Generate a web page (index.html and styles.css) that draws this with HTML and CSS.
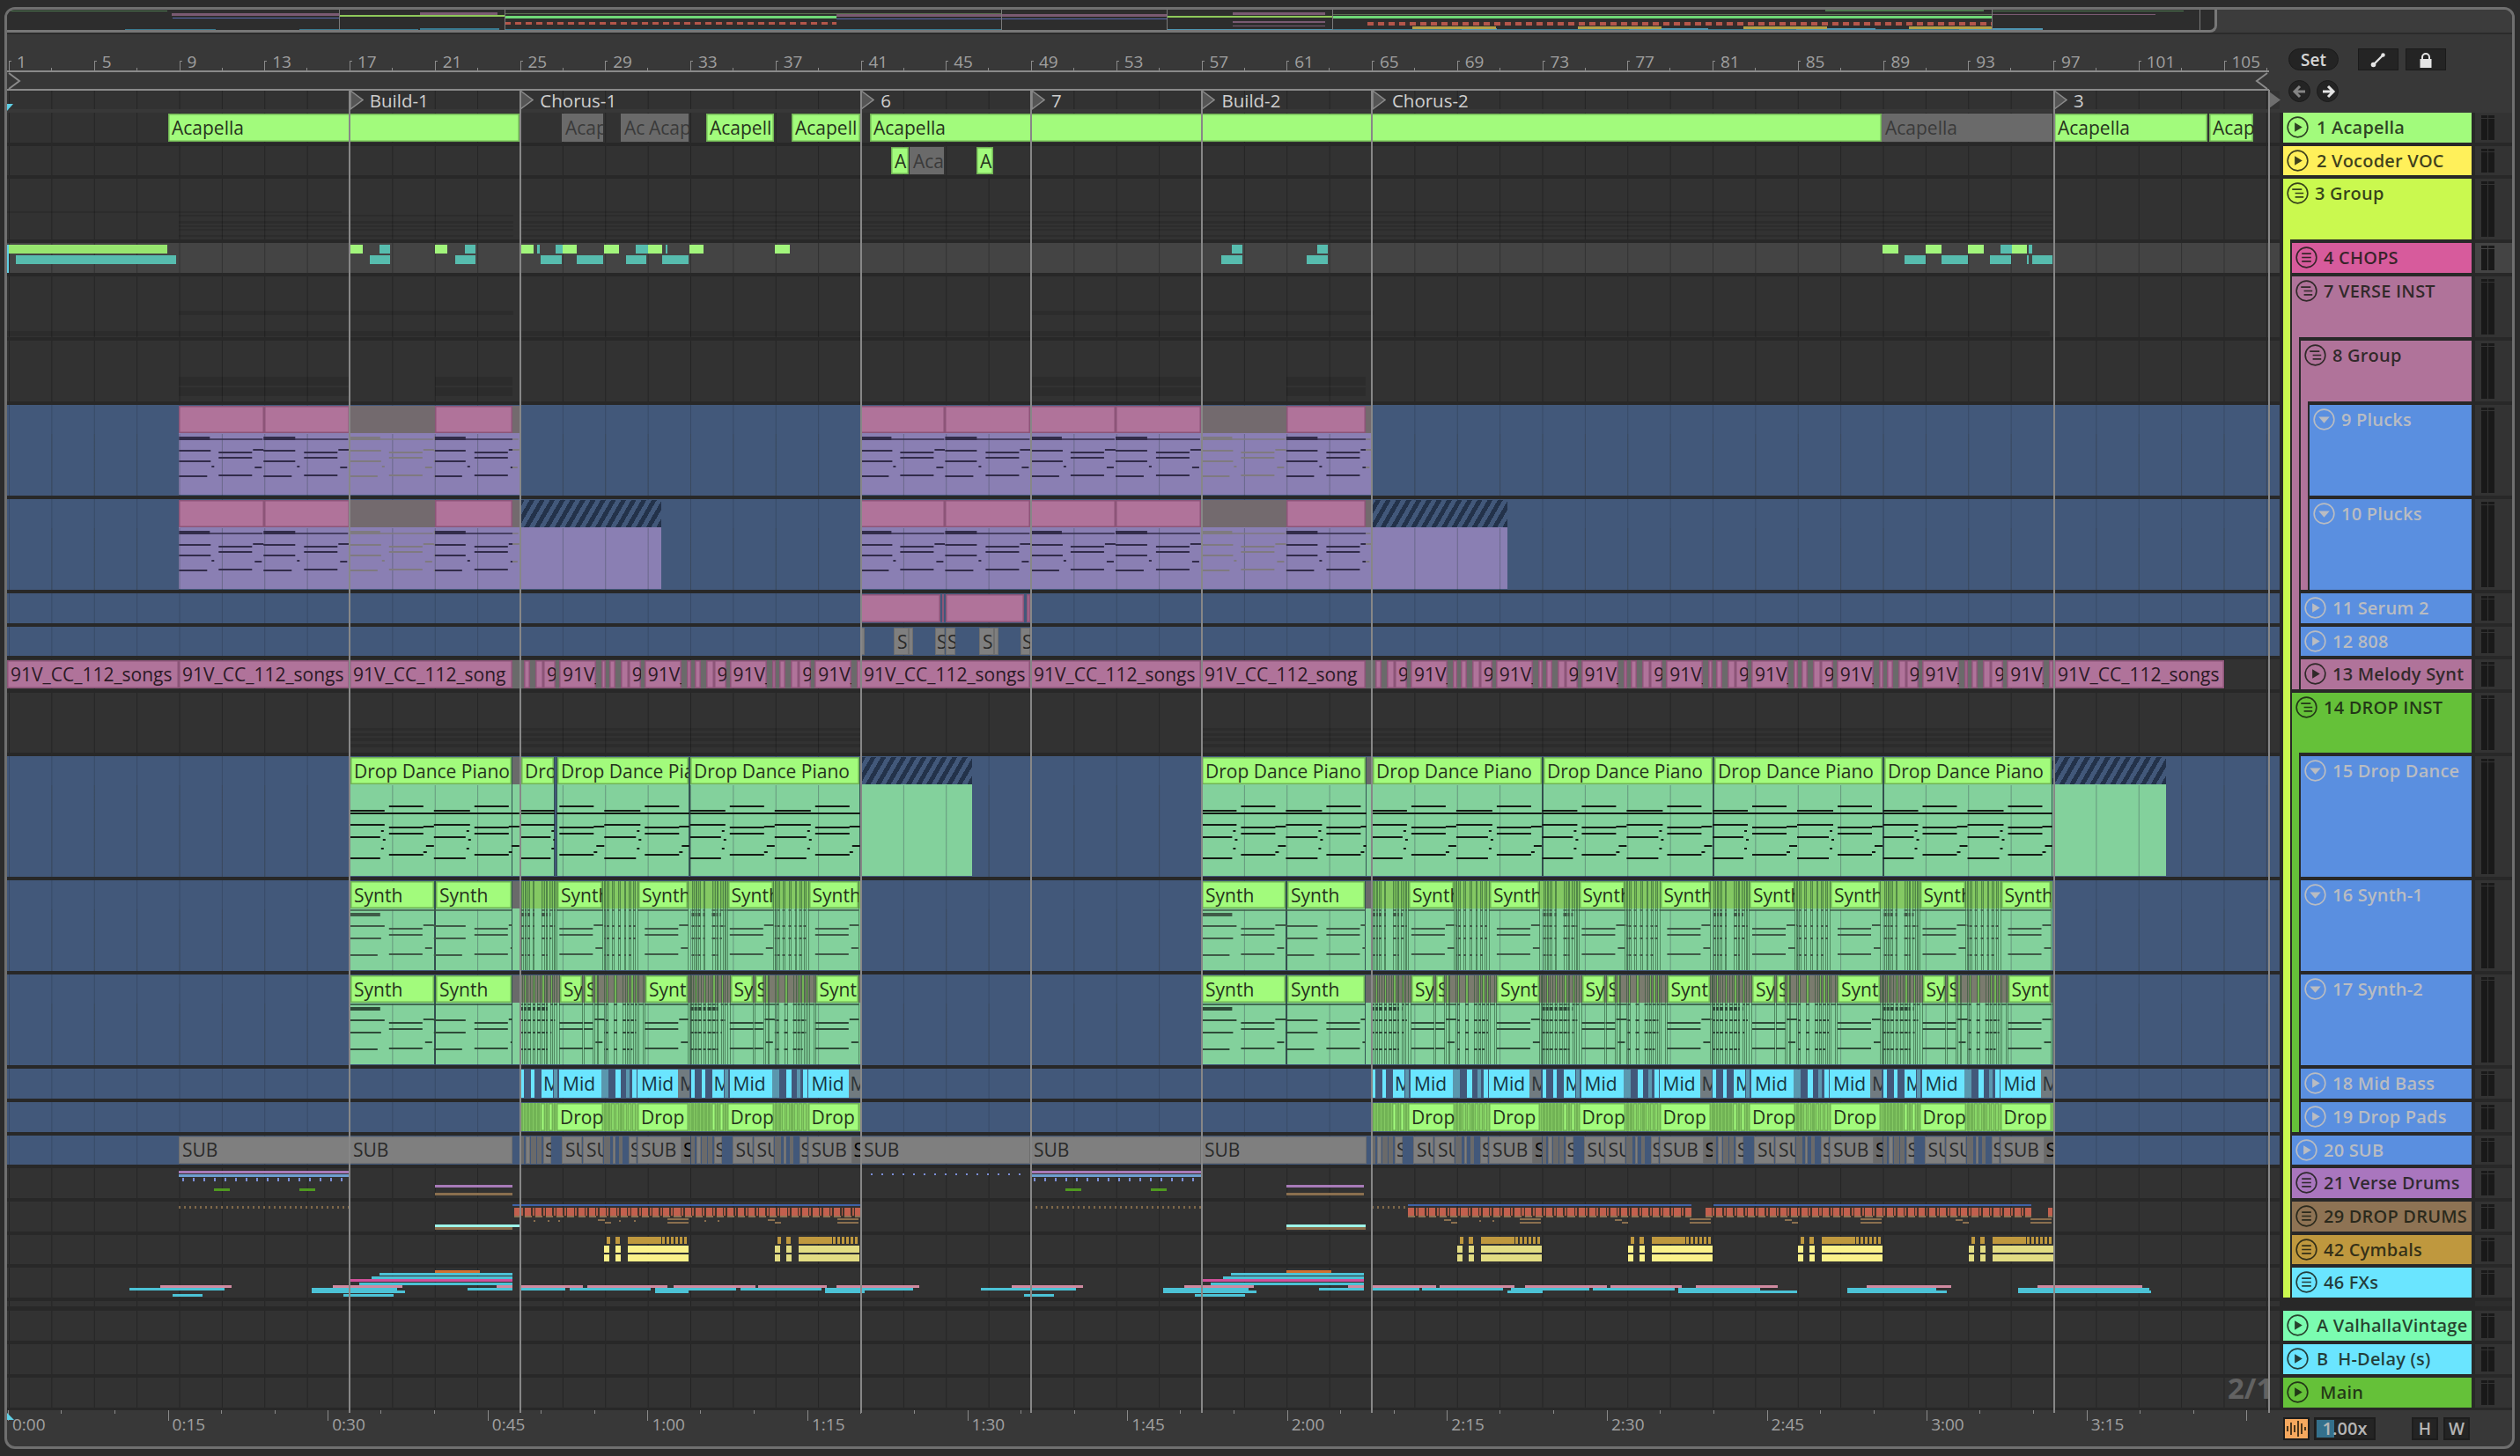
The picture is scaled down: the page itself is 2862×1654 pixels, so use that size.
FILE: index.html
```html
<!DOCTYPE html>
<html lang="en">
<head>
<meta charset="utf-8">
<title>Arrangement</title>
<link rel="stylesheet" href="styles.css">
</head>
<body>
<svg class="sprite" width="0" height="0" aria-hidden="true">
  <symbol id="i-play" viewBox="0 0 26 26"><circle cx="13" cy="13" r="11.8" fill="none" stroke="currentColor" stroke-width="1.7"/><polygon points="9.5,7.5 18.5,13 9.5,18.5" fill="currentColor"/></symbol>
  <symbol id="i-group" viewBox="0 0 26 26"><circle cx="13" cy="13" r="11.8" fill="none" stroke="currentColor" stroke-width="1.7"/><path d="M6.5 8.5H18M10 13H20M10 17.5H20" stroke="currentColor" stroke-width="1.8" fill="none"/></symbol>
  <symbol id="i-list" viewBox="0 0 26 26"><circle cx="13" cy="13" r="11.8" fill="none" stroke="currentColor" stroke-width="1.7"/><path d="M7.5 8.5H18.5M7.5 13H18.5M7.5 17.5H18.5" stroke="currentColor" stroke-width="1.8" fill="none"/></symbol>
  <symbol id="i-fold" viewBox="0 0 26 26"><circle cx="13" cy="13" r="11.8" fill="none" stroke="currentColor" stroke-width="1.7"/><polygon points="6.5,10 19.5,10 13,17.5" fill="currentColor"/></symbol>
</svg>
<main class="frame">
  <section class="overview-row"><div class="overview" id="overview"></div></section>
  <section class="top-row">
    <div class="timeline-top">
      <div class="ruler" id="ruler"></div>
      <div class="loopbar">
        <svg class="loop-start" width="17" height="22" viewBox="0 0 17 22"><path d="M2 2L14 11L2 20" fill="none" stroke="#8a8a8a" stroke-width="2"/></svg>
        <svg class="loop-end" width="17" height="22" viewBox="0 0 17 22"><path d="M15 2L3 11L15 20" fill="none" stroke="#8a8a8a" stroke-width="2"/></svg>
      </div>
      <div class="locators grid" id="locators"><span class="cue-top"></span></div>
    </div>
    <div class="side-top">
      <div class="side-line">
        <button class="pill">Set</button>
        <span class="side-buttons">
          <button class="sq"><svg width="20" height="20" viewBox="0 0 20 20"><path d="M5 15L15 5" stroke="#e4e4e4" stroke-width="2.4"/><circle cx="4.5" cy="15.5" r="2.8" fill="#e4e4e4"/><circle cx="15.5" cy="4.5" r="2.2" fill="#e4e4e4"/></svg></button>
          <button class="sq"><svg width="20" height="20" viewBox="0 0 20 20"><path d="M6 10V7a4 4 0 0 1 8 0v3" fill="none" stroke="#e4e4e4" stroke-width="2"/><rect x="3.5" y="9" width="13" height="10" fill="#e4e4e4"/></svg></button>
        </span>
      </div>
      <div class="side-line arrows">
        <button class="round"><svg width="18" height="18" viewBox="0 0 18 18"><path d="M9 3L3 9L9 15M3 9H15" fill="none" stroke="#858585" stroke-width="3"/></svg></button>
        <button class="round"><svg width="18" height="18" viewBox="0 0 18 18"><path d="M9 3L15 9L9 15M15 9H3" fill="none" stroke="#e4e4e4" stroke-width="3"/></svg></button>
      </div>
    </div>
  </section>
  <section class="tracks" id="tracks">
    <div class="row h-s" data-t="1"><div class="canvas grid"></div><div class="hd"><div class="lab c-green"><svg class="ic"><use href="#i-play"/></svg><span class="nm">1 Acapella</span></div></div><div class="meter"><i></i><i></i></div></div>
    <div class="row h-s" data-t="2"><div class="canvas grid"></div><div class="hd"><div class="lab c-yellow"><svg class="ic"><use href="#i-play"/></svg><span class="nm">2 Vocoder VOC</span></div></div><div class="meter"><i></i><i></i></div></div>
    <div class="row h-m" data-t="3"><div class="canvas grid"></div><div class="hd"><div class="lab c-lime"><svg class="ic"><use href="#i-group"/></svg><span class="nm tight">3 Group</span></div></div><div class="meter"><i></i><i></i></div></div>
    <div class="row h-s sel" data-t="4"><div class="canvas grid"></div><div class="hd"><b class="st c-lime"></b><div class="lab c-pink"><svg class="ic"><use href="#i-list"/></svg><span class="nm tight">4 CHOPS</span></div></div><div class="meter"><i></i><i></i></div></div>
    <div class="row h-m" data-t="7"><div class="canvas grid"></div><div class="hd"><b class="st c-lime"></b><div class="lab c-mauve"><svg class="ic"><use href="#i-group"/></svg><span class="nm tight">7 VERSE INST</span></div></div><div class="meter"><i></i><i></i></div></div>
    <div class="row h-m" data-t="8"><div class="canvas grid"></div><div class="hd"><b class="st c-lime"></b><b class="st c-mauve"></b><div class="lab c-mauve"><svg class="ic"><use href="#i-group"/></svg><span class="nm tight">8 Group</span></div></div><div class="meter"><i></i><i></i></div></div>
    <div class="row h-l blue" data-t="9"><div class="canvas grid"></div><div class="hd"><b class="st c-lime"></b><b class="st c-mauve"></b><b class="st c-mauve"></b><div class="lab c-blue"><svg class="ic"><use href="#i-fold"/></svg><span class="nm tight">9 Plucks</span></div></div><div class="meter"><i></i><i></i></div></div>
    <div class="row h-l blue" data-t="10"><div class="canvas grid"></div><div class="hd"><b class="st c-lime"></b><b class="st c-mauve"></b><b class="st c-mauve last"></b><div class="lab c-blue"><svg class="ic"><use href="#i-fold"/></svg><span class="nm tight">10 Plucks</span></div></div><div class="meter"><i></i><i></i></div></div>
    <div class="row h-s blue" data-t="11"><div class="canvas grid"></div><div class="hd"><b class="st c-lime"></b><b class="st c-mauve"></b><div class="lab c-blue"><svg class="ic"><use href="#i-play"/></svg><span class="nm tight">11 Serum 2</span></div></div><div class="meter"><i></i><i></i></div></div>
    <div class="row h-s blue" data-t="12"><div class="canvas grid"></div><div class="hd"><b class="st c-lime"></b><b class="st c-mauve"></b><div class="lab c-blue"><svg class="ic"><use href="#i-play"/></svg><span class="nm tight">12 808</span></div></div><div class="meter"><i></i><i></i></div></div>
    <div class="row h-s" data-t="13"><div class="canvas grid"></div><div class="hd"><b class="st c-lime"></b><b class="st c-mauve last"></b><div class="lab c-mauve"><svg class="ic"><use href="#i-play"/></svg><span class="nm tight">13 Melody Synt</span></div></div><div class="meter"><i></i><i></i></div></div>
    <div class="row h-m short" data-t="14"><div class="canvas grid"></div><div class="hd"><b class="st c-lime"></b><div class="lab c-leaf"><svg class="ic"><use href="#i-group"/></svg><span class="nm tight">14 DROP INST</span></div></div><div class="meter"><i></i><i></i></div></div>
    <div class="row h-xl blue" data-t="15"><div class="canvas grid"></div><div class="hd"><b class="st c-lime"></b><b class="st c-leaf"></b><div class="lab c-blue"><svg class="ic"><use href="#i-fold"/></svg><span class="nm tight">15 Drop Dance</span></div></div><div class="meter"><i></i><i></i></div></div>
    <div class="row h-l blue" data-t="16"><div class="canvas grid"></div><div class="hd"><b class="st c-lime"></b><b class="st c-leaf"></b><div class="lab c-blue"><svg class="ic"><use href="#i-fold"/></svg><span class="nm tight">16 Synth-1</span></div></div><div class="meter"><i></i><i></i></div></div>
    <div class="row h-l blue" data-t="17"><div class="canvas grid"></div><div class="hd"><b class="st c-lime"></b><b class="st c-leaf"></b><div class="lab c-blue"><svg class="ic"><use href="#i-fold"/></svg><span class="nm tight">17 Synth-2</span></div></div><div class="meter"><i></i><i></i></div></div>
    <div class="row h-s blue" data-t="18"><div class="canvas grid"></div><div class="hd"><b class="st c-lime"></b><b class="st c-leaf"></b><div class="lab c-blue"><svg class="ic"><use href="#i-play"/></svg><span class="nm tight">18 Mid Bass</span></div></div><div class="meter"><i></i><i></i></div></div>
    <div class="row h-s blue" data-t="19"><div class="canvas grid"></div><div class="hd"><b class="st c-lime"></b><b class="st c-leaf last"></b><div class="lab c-blue"><svg class="ic"><use href="#i-play"/></svg><span class="nm tight">19 Drop Pads</span></div></div><div class="meter"><i></i><i></i></div></div>
    <div class="row h-s blue" data-t="20"><div class="canvas grid"></div><div class="hd"><b class="st c-lime"></b><div class="lab c-blue"><svg class="ic"><use href="#i-play"/></svg><span class="nm tight">20 SUB</span></div></div><div class="meter"><i></i><i></i></div></div>
    <div class="row h-s" data-t="21"><div class="canvas grid"></div><div class="hd"><b class="st c-lime"></b><div class="lab c-purple"><svg class="ic"><use href="#i-list"/></svg><span class="nm tight">21 Verse Drums</span></div></div><div class="meter"><i></i><i></i></div></div>
    <div class="row h-s" data-t="29"><div class="canvas grid"></div><div class="hd"><b class="st c-lime"></b><div class="lab c-brown"><svg class="ic"><use href="#i-list"/></svg><span class="nm tight">29 DROP DRUMS</span></div></div><div class="meter"><i></i><i></i></div></div>
    <div class="row h-s" data-t="42"><div class="canvas grid"></div><div class="hd"><b class="st c-lime"></b><div class="lab c-gold"><svg class="ic"><use href="#i-list"/></svg><span class="nm tight">42 Cymbals</span></div></div><div class="meter"><i></i><i></i></div></div>
    <div class="row h-s" data-t="46"><div class="canvas grid"></div><div class="hd"><b class="st c-lime last"></b><div class="lab c-cyan"><svg class="ic"><use href="#i-list"/></svg><span class="nm tight">46 FXs</span></div></div><div class="meter"><i></i><i></i></div></div>
    <div class="row h-thin"><div class="canvas grid"></div><div class="hd"></div><div class="meter bare"></div></div>
    <div class="row h-s" data-t="A"><div class="canvas grid"></div><div class="hd"><div class="lab c-mint"><svg class="ic"><use href="#i-play"/></svg><span class="nm">A ValhallaVintage</span></div></div><div class="meter"><i></i><i></i></div></div>
    <div class="row h-s" data-t="B"><div class="canvas grid"></div><div class="hd"><div class="lab c-cyan"><svg class="ic"><use href="#i-play"/></svg><span class="nm">B&nbsp; H-Delay (s)</span></div></div><div class="meter"><i></i><i></i></div></div>
    <div class="row h-s" data-t="M"><div class="canvas grid"></div><div class="hd"><div class="lab c-leaf"><svg class="ic"><use href="#i-play"/></svg><span class="nm main">Main</span></div></div><div class="meter"><i></i><i></i></div></div>
    <div class="sig">2/1</div>
    <div class="vlines" id="vlines"></div>
  </section>
  <section class="bottom-row">
    <div class="timeruler" id="timeruler"><span class="cue-bottom"></span></div>
    <div class="side-bottom">
      <button class="wave"><svg width="26" height="22" viewBox="0 0 26 22"><path d="M3 8V14M7 4V18M11 7V15M15 2V20M19 5V17M23 9V13" stroke="#3a2a14" stroke-width="1.8"/></svg></button>
      <div class="tempo"><span class="tempo-fill"></span><span class="tempo-txt">1.00x</span></div>
      <span class="hw"><button class="key">H</button><button class="key">W</button></span>
    </div>
  </section>
</main>
<script src="script.js"></script>
</body>
</html>
```
FILE: styles.css
```css
* { box-sizing: border-box; }
html, body { margin: 0; padding: 0; }
body { width: 2862px; height: 1654px; background: #2c2c2c; overflow: hidden; font-family: "Open Sans", "Liberation Sans", sans-serif; }
.sprite { position: absolute; }
button { font-family: inherit; padding: 0; border: 0; }

.frame { width: 2851px; height: 1638px; margin: 8px 0 0 5px; border: 3px solid #6f6f6f; border-radius: 12px; background: #383838; display: flex; flex-direction: column; overflow: hidden; }

/* overview */
.overview-row { height: 28px; flex: none; background: #3c3c3c; border-bottom: 2px solid #2b2b2b; }
.overview { position: relative; width: 2510px; height: 26px; background: #2d2d2d; border-right: 3px solid #777; border-bottom: 3px solid #777; border-bottom-right-radius: 8px; overflow: hidden; }
.ov { position: absolute; display: block; }
.ov-red { background: repeating-linear-gradient(90deg, #b4564a 0 7px, #3b2c2a 7px 12px); }
.ov-gold { background: repeating-linear-gradient(90deg, #b5a148 0 95px, transparent 95px 188px); }

/* top */
.top-row { flex: none; height: 85px; margin-bottom: 4px; display: grid; grid-template-columns: 2581px 1fr; }
.timeline-top { display: flex; flex-direction: column; min-width: 0; }
.ruler { height: 41px; flex: none; display: flex; padding-left: 2px; background: #383838; }
.bar-cell { flex: none; width: 96.76px; height: 41px; position: relative; padding: 18px 0 0 9px; font-size: 19px; line-height: 26px; color: #a0a0a0; background: linear-gradient(#8a8a8a, #8a8a8a) 48px 38px / 1px 3px no-repeat; }
.bar-cell::before { content: ""; position: absolute; left: 0; bottom: 0; width: 1px; height: 11px; background: #8a8a8a; }
.bar-cell::after { content: ""; position: absolute; left: 0; bottom: 10px; width: 3px; height: 1px; background: #8a8a8a; }
.loopbar { position: relative; height: 23px; flex: none; width: 2569px; background: #373737; border-top: 2px solid #8a8a8a; border-bottom: 2px solid #8a8a8a; }
.loop-start { position: absolute; left: 0; top: -1px; }
.loop-end { position: absolute; right: 0; top: -1px; }
.locators { position: relative; height: 21px; flex: none; }
.grid { background-color: #323232; background-image: linear-gradient(90deg, rgba(0,0,0,.28) 1.4px, transparent 1.4px); background-size: 48.38px 100%; background-position: 2px 0; }
.cue-top { position: absolute; left: 0; top: 15px; width: 0; height: 0; border-left: 7px solid #5fd0e6; border-right: 0; border-bottom: 8px solid transparent; border-top: 0; }
.locator { position: absolute; top: 0; height: 21px; display: flex; align-items: center; color: #cfcfcf; font-size: 20.5px; white-space: nowrap; }
.locator svg { margin-right: 7px; flex: none; }

/* side top */
.side-top { padding: 16px 0 0 10px; display: flex; flex-direction: column; gap: 11px; }
.side-line { display: flex; align-items: center; }
.pill { width: 57px; height: 25px; border-radius: 13px; background: #242424; border: 1px solid #1b1b1b; color: #d6d6d6; font-size: 19px; font-weight: 600; line-height: 22px; }
.side-buttons { display: flex; gap: 8px; margin-left: 22px; }
.sq { width: 46px; height: 25px; background: #242424; border: 1px solid #1b1b1b; display: flex; align-items: center; justify-content: center; }
.arrows { gap: 7px; }
.round { width: 25px; height: 25px; border-radius: 50%; background: #242424; border: 1px solid #1b1b1b; display: flex; align-items: center; justify-content: center; }

/* tracks */
.tracks { position: relative; flex: none; display: flex; flex-direction: column; gap: 4px; background: #282828; padding-bottom: 3px; }
.row { display: grid; grid-template-columns: 2581px 214px 42px; column-gap: 4px; flex: none; }
.h-s { height: 33.7px; }
.h-m { height: 69px; }
.h-m.short { height: 68px; }
.h-l { height: 103px; }
.h-xl { height: 137px; }
.h-thin { height: 6.5px; margin-bottom: 1px; }
.row.sel .canvas { background-color: #444; }
.row.blue .canvas { background-color: #42587a; background-image: linear-gradient(90deg, rgba(0,0,0,.16) 1.4px, transparent 1.4px); }
.canvas { position: relative; overflow: hidden; min-width: 0; }
.hd { display: flex; min-width: 0; }
.st { flex: none; width: 8px; margin: -4px 2px -4px 0; }
.st.last { margin-bottom: 0; }
.lab { flex: 1; min-width: 0; display: flex; align-items: flex-start; padding: 4px 0 0 4px; color: rgba(20,24,16,.82); overflow: hidden; white-space: nowrap; }
.ic { width: 25px; height: 25px; flex: none; margin-right: 9px; }
.nm { font-size: 20px; font-weight: 600; line-height: 25px; letter-spacing: .2px; }
.nm.tight { margin-left: -2px; }
.nm.main { margin-left: 4px; }
.c-green { background: #a2fb7c; }
.c-yellow { background: #fff05a; }
.c-lime { background: #caf94f; }
.c-pink { background: #d75b9c; }
.c-mauve { background: #b0739a; }
.c-blue { background: #5a8fe0; color: #b9bcc2; }
.c-leaf { background: #65c139; }
.c-purple { background: #a976be; }
.c-brown { background: #8e7354; }
.c-gold { background: #bf983e; }
.c-cyan { background: #6ae5ff; }
.c-mint { background: #7bfcb0; }
.st.c-mauve { background: #b0739a; }
.meter { background: #333; display: flex; gap: 1px; padding: 3px 0 3px 7px; }
.row.sel .meter { background: #444; }
.meter.bare { background: #2d2d2d; }
.meter i { display: block; width: 7px; background: linear-gradient(#191919 0 3px, transparent 3px 4px, #191919 4px); }

.sig { position: absolute; left: 2522px; top: 1429px; font-size: 33px; font-weight: 700; color: #626262; line-height: 40px; }
.vlines { position: absolute; left: 0; top: -26px; bottom: -3px; width: 2581px; pointer-events: none; }
.vl { position: absolute; top: 0; bottom: 0; width: 2px; background: #878787; }

/* clips */
.clip { position: absolute; top: 1px; bottom: 1px; overflow: hidden; }
.head { height: 100%; display: flex; align-items: center; padding-left: 4px; font-size: 21px; white-space: nowrap; overflow: hidden; line-height: 26px; }
.k-g .head { background: #a2fb7c; color: #26331d; box-shadow: inset 0 0 0 1.5px #71b355; }
.k-x .head { background: #6a6a6a; color: #3a3a3a; }
.k-xg .head { background: #7a7b6e; color: #333; }
.k-p .head { background: #b0739a; color: #2c1a26; box-shadow: inset 0 0 0 1.5px #8c5578; }
.k-q .head { background: #736a6e; }
.k-c .head { background: #6ae5ff; color: #173443; }
.k-d .head { background: #5a97ae; color: #263a44; }
.k-y .head { background: #717b80; color: #2c3338; }
.k-s .head { background: #7f7f7f; color: #2a2a2a; box-shadow: inset 0 0 0 1px #6e6e6e; }
.k-t .head { background: #6a6a6a; }
.k-h .head { background: repeating-linear-gradient(-60deg, #23324a 0 5px, #42587a 5px 10px); }
.tall .head { height: 31px; }
.tall .body { position: absolute; left: 0; right: 0; top: 31px; bottom: 0; }
.m-g .body { background: #83d19c; }
.m-p .body { background: #8a7fb3; }
.edge { border-left: 1px solid rgba(40,80,50,.55); }
.edge2 { border-right: 1px solid rgba(40,80,50,.55); }
.strip .head { padding-left: 2px; }

.rc { position: absolute; display: block; }
.band { position: absolute; top: 1px; height: 31px; }
.band-green { background: #84c963; }
.band-grey { background: #7a7b6e; }
.gridover { position: absolute; left: 0; right: 0; top: 33px; bottom: 0; background-image: linear-gradient(90deg, rgba(60,70,80,.42) 1.4px, transparent 1.4px); background-size: 48.38px 100%; background-position: 2px 0; pointer-events: none; }
.notes { position: absolute; left: 0; top: 0; width: 2581px; height: 100%; pointer-events: none; }
.redbar { background: repeating-linear-gradient(90deg, #c2604e 0 7px, #3f322b 7px 8.5px, #b05c48 8.5px 10.5px, #3f322b 10.5px 12.1px); }
.dots-br { background: repeating-linear-gradient(90deg, #7e6749 0 2px, transparent 2px 6px); }
.dots-bl { background: repeating-linear-gradient(90deg, #7c8fd8 0 2px, transparent 2px 12px); }
.hatch-br { background: repeating-linear-gradient(90deg, #8e7354 0 8px, #3c342b 8px 12.1px); }

/* bottom */
.bottom-row { flex: 1; display: grid; grid-template-columns: 2581px 1fr; min-height: 0; }
.timeruler { position: relative; display: flex; padding-left: 1px; overflow: hidden; }
.cue-bottom { position: absolute; left: 0; top: 3px; width: 0; height: 0; border-left: 8px solid #5fd0e6; border-top: 8px solid transparent; }
.t-cell { flex: none; width: 181.6px; height: 40px; padding: 3px 0 0 5px; font-size: 19px; line-height: 26px; color: #a0a0a0; background: linear-gradient(#8a8a8a, #8a8a8a) 0 0 / 1px 12px no-repeat, linear-gradient(#8a8a8a, #8a8a8a) 60px 0 / 1px 4px no-repeat, linear-gradient(#8a8a8a, #8a8a8a) 121px 0 / 1px 4px no-repeat; }
.side-bottom { display: flex; align-items: flex-start; padding: 8px 0 0 4px; }
.wave { width: 30px; height: 26px; background: #f5a85e; border: 2px solid #1d1d1d; display: flex; align-items: center; justify-content: center; }
.tempo { position: relative; width: 70px; height: 26px; margin-left: 5px; background: #242424; border: 2px solid #1d1d1d; color: #b5b5b5; font-size: 20px; font-weight: 600; line-height: 22px; text-align: center; }
.tempo-fill { position: absolute; left: 1px; top: 1px; bottom: 1px; width: 20px; background: #34708c; }
.tempo-txt { position: relative; }
.hw { display: flex; gap: 6px; margin-left: 41px; }
.key { width: 30px; height: 26px; background: #242424; border: 2px solid #1d1d1d; color: #b5b5b5; font-size: 19px; font-weight: 600; line-height: 20px; }
```
FILE: script.js
```js
const B = b => 396.8 + (b - 17) * 24.19;
const P4 = 96.76, P8 = 193.52, CX = 8;
const cv = {}, tops = {}, paths = {};
document.querySelectorAll('.row[data-t]').forEach(r => {
  const c = r.querySelector('.canvas');
  cv[r.dataset.t] = c;
  tops[r.dataset.t] = c.getBoundingClientRect().top;
  paths[r.dataset.t] = {};
});

function clip(t, x0, x1, kind, label, opt) {
  opt = opt || {};
  const el = document.createElement('div');
  el.className = 'clip k-' + kind + (opt.body ? ' tall m-' + opt.body : '') + (x1 - x0 < 14 ? ' strip' : '');
  if (opt.edge) el.classList.add('edge', 'edge2');
  el.style.left = (x0 - CX) + 'px';
  el.style.width = (x1 - x0) + 'px';
  const h = document.createElement('div');
  h.className = 'head';
  if (label) h.textContent = label;
  el.appendChild(h);
  if (opt.body) { const b = document.createElement('div'); b.className = 'body'; el.appendChild(b); }
  cv[t].appendChild(el);
}
function rect(t, x, y, w, h, color, cls) {
  const el = document.createElement('span');
  el.className = 'rc' + (cls ? ' ' + cls : '');
  el.style.left = (x - CX) + 'px';
  el.style.top = (y - tops[t]) + 'px';
  el.style.width = w + 'px';
  el.style.height = h + 'px';
  if (color) el.style.background = color;
  cv[t].appendChild(el);
}
function band(t, a, b, cls, full) {
  const el = document.createElement('span');
  el.className = 'band ' + cls;
  el.style.left = (a - CX) + 'px';
  el.style.width = (b - a) + 'px';
  if (full) el.style.height = (cv[t].clientHeight - 2) + 'px';
  cv[t].prepend(el);
}
/* notes drawn as horizontal strokes: pattern entries [offset, length, y, thickness?] */
function notes(t, x0, x1, bodyTop, pat, color) {
  const org = B(9);
  const k0 = Math.floor((x0 - org) / P8) - 1, k1 = Math.ceil((x1 - org) / P8);
  const store = paths[t];
  store[color] = store[color] || [];
  for (let k = k0; k <= k1; k++) {
    for (const n of pat) {
      const a = Math.max(org + k * P8 + n[0], x0), b = Math.min(org + k * P8 + n[0] + n[1], x1);
      if (b - a < .5) continue;
      const y = bodyTop - tops[t] + n[2];
      const th = n[3] || 1.8;
      store[color].push('M' + (a - CX).toFixed(1) + ' ' + (y - th / 2).toFixed(1) + 'H' + (b - CX).toFixed(1) + 'V' + (y + th / 2).toFixed(1) + 'H' + (a - CX).toFixed(1) + 'Z');
    }
  }
}
const PN = [[45,39,24],[142,39,24],[0,40,29],[96,41,29],[0,193,32],[0,40,45],[96,41,45],[45,39,48],[142,39,48],[84,12,47],[181,12,47],[45,39,55],[142,39,55],[0,35,59],[96,36,59],[36,3,52],[133,3,52],[38,3,62],[135,3,62],[87,9,69],[184,9,69],[36,3,72],[133,3,72],[45,39,79],[142,39,79],[0,35,83],[96,36,83],[84,4,76],[181,4,76]];
const PP = [[0,35,5,4],[35,60,6,1.5],[96,36,5,4],[132,60,6,1.5],[0,36,19],[45,38,21],[84,12,18],[96,36,19],[142,38,21],[181,12,18],[45,38,27],[142,38,27],[0,36,31],[96,36,31],[86,8,38],[183,8,38],[37,3,37],[134,3,37],[0,32,48],[96,32,48],[45,38,47],[142,38,47]];
const PS = [[0,35,6,4],[0,193,1,1.5],[0,40,19],[45,38,22],[84,12,18],[96,36,19],[142,38,22],[181,12,18],[45,38,29],[142,38,29],[0,36,33],[96,36,33],[86,8,44],[183,8,44],[0,32,52],[96,32,52],[45,38,51],[142,38,51]];

/* T1 + T2 */
clip('1', 191, 590, 'g', 'Acapella');
clip('1', 638, 685, 'x', 'Acap'); clip('1', 705, 733, 'x', 'Ac'); clip('1', 733, 782, 'x', 'Acap');
clip('1', 802, 879, 'g', 'Acapell'); clip('1', 899, 977, 'g', 'Acapell');
clip('1', 988, 2137, 'g', 'Acapella'); clip('1', 2137, 2331, 'x', 'Acapella');
clip('1', 2333, 2507, 'g', 'Acapella'); clip('1', 2509, 2559, 'g', 'Acap');
clip('2', 1012, 1032, 'g', 'A'); clip('2', 1033, 1072, 'x', 'Aca'); clip('2', 1109, 1128, 'g', 'A');

/* T4 */
const GRN = '#a2f57c', TEA = '#57bcae';
[[397,15],[494,14],[591,15],[639,16],[686,17],[736,16],[783,16],[880,17],[2138,18],[2187,18],[2235,18],[2285,17]].forEach(a => rect('4', a[0], 278, a[1], 10, GRN));
rect('4', 10, 278, 180, 10, '#97e56f');
[[431,12],[528,12],[610,3],[631,8],[722,14],[756,2],[1399,12],[1496,12],[2272,13],[2304,4]].forEach(a => rect('4', a[0], 278, a[1], 10, TEA));
[[18,182],[420,23],[517,23],[614,24],[655,30],[711,23],[752,30],[1387,24],[1484,24],[2163,24],[2205,30],[2260,24],[2302,2],[2308,23]].forEach(a => rect('4', a[0], 290, a[1], 10, TEA));
rect('4', 8, 278, 2, 33, '#5fd0e6');

/* faint stripes in collapsed groups */
const FAINT = 'rgba(0,0,0,.11)';
[[240,2],[244,2],[251,3],[256,2],[260,2],[267,2]].forEach((s, i) => { rect('3', i < 1 ? 8 : 203, s[0], 380, s[1], FAINT); rect('3', 591, s[0], 386, s[1], FAINT); rect('3', 977, s[0], 580, s[1], FAINT); rect('3', 1558, s[0], 773, s[1], FAINT); });
[[353,5,203,380],[353,5,1170,390],[376,6,8,2320]].forEach(s => rect('7', s[2], s[0], s[3], s[1], FAINT));
[[428,10],[440,10]].forEach(s => { rect('8', 203, s[0], 194, s[1], FAINT); rect('8', 494, s[0], 88, s[1], FAINT); rect('8', 1170, s[0], 194, s[1], FAINT); rect('8', 1461, s[0], 90, s[1], FAINT); });
[[827,3],[833,3],[838,4],[845,4]].forEach(s => { rect('14', 397, s[0], 580, s[1], FAINT); rect('14', 1364, s[0], 967, s[1], FAINT); });

/* T9 + T10 */
function mauveBlock(t, top, segs) {
  segs.forEach(s => clip(t, s[0], s[1], s[2], '', { body: 'p' }));
  segs.forEach(s => notes(t, s[0], s[1], top, PP, s[2] === 'q' ? '#7f7a80' : '#322c4a'));
}
const mb1 = [[203,300,'p'],[300,397,'p'],[397,494,'q'],[494,582,'p'],[582,591,'q']];
const mb2 = [[977,1073,'p'],[1073,1170,'p'],[1170,1267,'p'],[1267,1364,'p'],[1364,1461,'q'],[1461,1551,'p'],[1551,1558,'q']];
mauveBlock('9', tops['9'] + 33, mb1); mauveBlock('9', tops['9'] + 33, mb2);
mauveBlock('10', tops['10'] + 33, mb1); mauveBlock('10', tops['10'] + 33, mb2);
clip('10', 591, 751, 'h', '', { body: 'p' }); clip('10', 1558, 1712, 'h', '', { body: 'p' });

/* T11 + T12 */
clip('11', 977, 1068, 'p'); clip('11', 1070, 1072, 'p'); clip('11', 1074, 1163, 'p'); clip('11', 1166, 1170, 'p');
[[977,982,''],[1015,1032,'S'],[1032,1037,''],[1062,1073,'S'],[1074,1085,'S'],[1112,1129,'S'],[1129,1134,''],[1159,1170,'S']].forEach(a => clip('12', a[0], a[1], 's', a[2]));

/* T13 */
const SONG = '91V_CC_112_songs';
clip('13', 8, 203, 'p', SONG); clip('13', 203, 397, 'p', SONG); clip('13', 397, 582, 'p', '91V_CC_112_song'); clip('13', 582, 591, 'x');
clip('13', 977, 1170, 'p', SONG); clip('13', 1170, 1364, 'p', SONG); clip('13', 1364, 1551, 'p', '91V_CC_112_song'); clip('13', 1551, 1558, 'x');
clip('13', 2333, 2526, 'p', SONG);
function pat(t, start, n, period, list) {
  for (let k = 0; k < n; k++) list(start + k * period, k);
}
const P13 = [[0,4,'x'],[4,11,'p'],[11,17,'x'],[17,26,'p'],[26,40,'p','9'],[40,44,'x'],[44,86,'p','91V_'],[86,92,'x'],[92,96.76,'p']];
const run13 = o => P13.forEach(a => clip('13', o + a[0], o + a[1], a[2], a[3]));
pat('13', 591, 4, P4, run13); pat('13', 1558, 8, P4, run13);

/* T15 */
const t15 = tops['15'] + 33;
function piano(x0, x1, label) {
  clip('15', x0, x1, 'g', label, { body: 'g', edge: true });
  notes('15', x0, x1, t15, PN, '#141a14');
}
piano(397, 582, 'Drop Dance Piano'); clip('15', 582, 591, 'x', '', { body: 'g' }); notes('15', 582, 591, t15, PN, '#141a14');
piano(591, 630, 'Dro'); piano(632, 783, 'Drop Dance Pia'); piano(783, 977, 'Drop Dance Piano');
clip('15', 977, 1104, 'h', '', { body: 'g' });
piano(1364, 1552, 'Drop Dance Piano'); clip('15', 1552, 1558, 'x', '', { body: 'g' });
[[1558,1752],[1752,1946],[1946,2139],[2139,2331]].forEach(a => piano(a[0], a[1], 'Drop Dance Piano'));
clip('15', 2331, 2460, 'h', '', { body: 'g' });

/* T16 + T17 */
const P16 = [[1,4],[5,7],[8,11],[14,16],[24,28],[29,31],[33,37],[38,40],[41,94,'Synth'],[95,97],[98,101],[104,107],[111,114],[118,120],[123,126],[128,131],[133,191,'Synth']];
const P17 = [[0,3,'xg'],[4,7],[8,12,'xg'],[14,17],[19,23,'xg'],[24,28],[29,31],[34,37],[38,42,'xg'],[44,71,'Sy'],[72,83,'S'],[84,88],[88,96,'xg'],[97,100],[106,110],[116,120,'xg'],[121,124],[125,129],[130,133],[134,140,'xg'],[141,191,'Synt'],[192,193,'xg']];
function fillBody(t, a, b) {
  const el = document.createElement('span');
  el.className = 'rc';
  el.style.left = (a - CX) + 'px'; el.style.width = (b - a) + 'px';
  el.style.top = '32px'; el.style.bottom = '1px';
  el.style.background = '#83d19c';
  cv[t].prepend(el);
}
function synth(t, list, bandCls) {
  const top = tops[t] + 33;
  const col = t === '16' ? '#3f5a47' : '#2e4a38';
  const put = (a, b, kind, lab) => {
    clip(t, a, b, kind || 'g', lab, { body: 'g', edge: true });
    notes(t, a, b, top, PS, col);
  };
  fillBody(t, 591, 977); fillBody(t, 1558, 2331);
  band(t, 591, 977, bandCls); band(t, 1558, 2331, bandCls);
  put(397, 494, 'g', 'Synth'); put(494, 582, 'g', 'Synth'); clip(t, 582, 591, 'x', '', { body: 'g' });
  put(1364, 1461, 'g', 'Synth'); put(1461, 1551, 'g', 'Synth'); clip(t, 1551, 1558, 'x', '', { body: 'g' });
  const run = o => list.forEach(s => put(o + s[0], o + s[1], s[2] === 'xg' ? 'xg' : 'g', s[2] === 'xg' ? '' : s[2]));
  pat(t, 591, 2, P8, run); pat(t, 1558, 4, P8, run);
}
synth('16', P16, 'band-green'); synth('17', P17, 'band-grey');

/* T18 */
const P18 = [[0,4,'c'],[12,16,'c'],[24,37,'c','M'],[38,42,'d'],[44,92,'c','Mid'],[92,96,'d'],[96,100,'d'],[108,114,'c'],[120,124,'d'],[127,132,'c'],[133,179,'c','Mid'],[179,192,'y','M']];
const run18 = o => P18.forEach(a => clip('18', o + a[0], o + a[1], a[2], a[3]));
pat('18', 591, 2, P8, run18); pat('18', 1558, 4, P8, run18);

/* T19 */
const P19 = [[0,3],[4,6],[7,10],[11,14],[15,18],[19,22],[23,28],[29,31],[32,37],[38,40],[41,94,'Drop'],[95,98],[99,102],[103,107],[108,112],[113,116],[117,121],[122,126],[127,131],[133,191,'Drop'],[192,193]];
band('19', 591, 977, 'band-green', true); band('19', 1558, 2331, 'band-green', true);
const run19 = o => P19.forEach(a => clip('19', o + a[0], o + a[1], 'g', a[2]));
pat('19', 591, 2, P8, run19); pat('19', 1558, 4, P8, run19);

/* T20 */
clip('20', 203, 397, 's', 'SUB'); clip('20', 397, 582, 's', 'SUB');
clip('20', 977, 1170, 's', 'SUB'); clip('20', 1170, 1364, 's', 'SUB'); clip('20', 1364, 1552, 's', 'SUB');
const P20 = [[0,4,'t'],[6,11,'s'],[12,18,'t'],[19,24,'t'],[26,35,'s','S'],[47,70,'s','SU'],[71,94,'s','SU'],[95,102,'t'],[105,108,'s'],[112,116,'t'],[123,132,'s','S'],[133,183,'s','SUB'],[183,193,'t','S']];
const run20 = o => P20.forEach(a => clip('20', o + a[0], o + a[1], a[2], a[3]));
pat('20', 591, 2, P8, run20); pat('20', 1558, 4, P8, run20);

/* T21 */
[0, 967].forEach(d => {
  rect('21', 203 + d, 1330, 194, 3, '#a77ab8');
  rect('21', 203 + d, 1334, 194, 3, '#6e9fd0');
  rect('21', 207 + d, 1338, 190, 4, '', 'dots-bl');
  rect('21', 243 + d, 1350, 18, 3, '#4f9a20');
  rect('21', 340 + d, 1350, 18, 3, '#4f9a20');
  rect('21', 494 + d, 1346, 88, 3, '#a77ab8');
  rect('21', 494 + d, 1355, 88, 3, '#8a6f4e');
});
rect('21', 977, 1333, 190, 2, '', 'dots-bl');

/* T29 */
[[203,194],[1170,194],[1558,42]].forEach(a => rect('29', a[0], 1370, a[1], 3, '', 'dots-br'));
[[584,393],[1599,322],[1937,370],[2326,5]].forEach(a => {
  rect('29', a[0], 1372, a[1], 9, '', 'redbar');
  rect('29', a[0], 1381, a[1], 2, '', 'hatch-br');
});
[[582,395],[1599,322],[1946,361]].forEach(a => rect('29', a[0], 1368, a[1], 2, '#3f63a8'));
[494, 1461].forEach(x => { rect('29', x, 1391, x === 494 ? 97 : 90, 3, '#9df5ea'); rect('29', x, 1394, x === 494 ? 88 : 90, 3, '#8a6f4e'); });
[679, 872, 1640, 1834, 2027, 2221].forEach(x => { rect('29', x, 1385, 8, 2, '#8a6f4e'); rect('29', x + 8, 1388, 7, 2, '#8a6f4e'); });
[758, 951, 1726, 1919, 2113, 2306].forEach(x => { rect('29', x, 1384, 24, 2, '#8a6f4e'); rect('29', x, 1388, 24, 2, '#8a6f4e'); });
[606, 622, 634, 703, 720, 800, 815, 1680, 1695].forEach(x => rect('29', x, 1386, 2, 2, '#8a6f4e'));

/* T42 */
[686, 880, 1655, 1849, 2042, 2236].forEach((x, i) => {
  const g = '#bf983e', y = (i % 3 === 0 || i === 4) ? '#fbf18a' : '#e2dc83';
  [[3,4],[13,5],[27,38]].forEach(s => rect('42', x + s[0], 1405, s[1], 8, g));
  for (let k = 0; k < 6; k++) rect('42', x + 66 + k * 5, 1405, 3, 8, g);
  [[0,6],[13,6],[27,69]].forEach(s => { rect('42', x + s[0], 1415, s[1], 8, y); rect('42', x + s[0], 1425, s[1], 8, y); });
});

/* T46 */
const PK = '#d08aa0', CY = '#4cc2d6';
const fx = [[182,81,1460,PK],[147,108,1463,CY],[196,34,1470,CY],[494,51,1443,'#d07030'],[431,151,1446,CY],[422,160,1450,CY],[397,185,1453,'#d0509a'],[408,174,1457,CY],[378,79,1460,PK],[564,18,1460,PK],[354,97,1463,CY],[531,51,1463,CY],[354,106,1466,CY],[390,57,1470,CY]];
fx.forEach(f => { rect('46', f[0], f[2], f[1], 2.5, f[3]); rect('46', f[0] + 967, f[2], f[1], 2.5, f[3]); });
[[591,71],[667,91],[765,93],[861,78],[950,94],[1559,72],[1635,85],[1732,93],[1829,81],[1926,93],[2120,96],[2314,119]].forEach(a => rect('46', a[0], 1460, a[1], 2.5, PK));
[[591,51],[647,92],[744,92],[841,92],[937,100],[1559,53],[1615,92],[1716,89],[1809,93],[1906,93],[2098,101],[2292,149]].forEach(a => rect('46', a[0], 1463, a[1], 2.5, CY));
[[744,38],[937,45],[1712,40],[1906,135],[2098,113],[2292,151]].forEach(a => rect('46', a[0], 1466, a[1], 2.5, CY));

/* note layers and beat grid over clip bodies */
Object.keys(paths).forEach(t => {
  const cols = Object.keys(paths[t]);
  if (!cols.length) return;
  const over = document.createElement('span');
  over.className = 'gridover';
  cv[t].appendChild(over);
  const s = document.createElementNS('http://www.w3.org/2000/svg', 'svg');
  s.setAttribute('class', 'notes');
  cols.forEach(c => {
    const p = document.createElementNS('http://www.w3.org/2000/svg', 'path');
    p.setAttribute('d', paths[t][c].join(''));
    p.setAttribute('fill', c);
    s.appendChild(p);
  });
  cv[t].appendChild(s);
});

/* ruler, time ruler */
const ruler = document.getElementById('ruler');
for (let b = 1; b <= 105; b += 4) { const d = document.createElement('div'); d.className = 'bar-cell'; d.textContent = b; ruler.appendChild(d); }
const tr = document.getElementById('timeruler');
for (let s = 0; s <= 210; s += 15) {
  const d = document.createElement('div'); d.className = 't-cell';
  if (s <= 195) d.textContent = Math.floor(s / 60) + ':' + String(s % 60).padStart(2, '0');
  tr.appendChild(d);
}

/* locators */
const loc = document.getElementById('locators');
[['Build-1',17],['Chorus-1',25],['6',41],['7',49],['Build-2',57],['Chorus-2',65],['3',97]].forEach(l => {
  const d = document.createElement('div');
  d.className = 'locator';
  d.style.left = (B(l[1]) - CX) + 'px';
  d.innerHTML = '<svg width="16" height="23" viewBox="0 0 16 23"><path d="M1 1L15 11.5L1 22Z" fill="#555" stroke="#8a8a8a" stroke-width="1.5"/></svg><span>' + l[0] + '</span>';
  loc.appendChild(d);
});
const endTri = document.createElement('div');
endTri.className = 'locator';
endTri.style.left = '2569px';
endTri.innerHTML = '<svg width="13" height="23" viewBox="0 0 13 23"><path d="M0 2L13 11.5L0 21Z" fill="#6e6e6e"/></svg>';
loc.appendChild(endTri);

/* vertical markers */
const vl = document.getElementById('vlines');
[17,25,41,49,57,65,97].map(B).concat([2576]).forEach(x => {
  const d = document.createElement('div');
  d.className = 'vl';
  d.style.left = (x - CX - .5) + 'px';
  vl.appendChild(d);
});

/* overview */
const ov = document.getElementById('overview');
function o(x, y, w, h, c, cls) {
  const d = document.createElement('span');
  d.className = 'ov' + (cls ? ' ' + cls : '');
  d.style.left = (x - CX) + 'px'; d.style.top = (y - 11) + 'px'; d.style.width = w + 'px'; d.style.height = h + 'px';
  if (c) d.style.background = c;
  ov.appendChild(d);
}
[[10,180,12,1,'#4f7a50'],[195,190,15,3,'#7a5a72'],[196,190,20,1,'#5a6bb0'],[142,103,33,2,'#3a7a90'],[340,45,33,2,'#3a7a90'],
 [385,188,17,2,'#8ec85a'],[477,88,14,3,'#7a5a72'],[385,90,33,2,'#3a7a90'],[477,90,32,3,'#3a7a90'],
 [573,377,18,3,'#6fd878'],[573,564,15,1,'#5a7050'],[950,187,16,3,'#7a5a72'],[950,187,21,1,'#5a6bb0'],[573,564,33,2,'#3a7a90'],
 [1137,188,16,3,'#7a5a72'],[1137,188,21,1,'#5a6bb0'],[1325,188,18,2,'#8ec85a'],[1400,105,14,3,'#7a5a72'],[1400,105,24,2,'#7a5a72'],[1400,105,29,1,'#7a5a72'],[1325,188,33,3,'#4e94b0'],
 [1513,750,18,3,'#6fd878'],[1513,750,16,1,'#5a7050'],[1513,750,33,2,'#3a7a90'],[1660,40,32,3,'#4e94b0'],[1850,90,32,3,'#4e94b0'],[2040,90,32,3,'#4e94b0'],[2225,95,32,3,'#4e94b0'],
 [2073,180,11,2,'#4f7a50'],[2262,186,16,1,'#7a5a72'],[2262,218,12,1,'#4f7a50']
].forEach(a => o(a[0], a[2], a[1], a[3], a[4]));
o(573, 25, 377, 3, '', 'ov-red');
o(1553, 25, 710, 4, '', 'ov-red');
o(1604, 30, 660, 3, '', 'ov-gold');
[385, 573, 1137, 1325, 1513, 2262, 2498].forEach(x => o(x, 11, 1, 24, '#7a7a7a'));
```
